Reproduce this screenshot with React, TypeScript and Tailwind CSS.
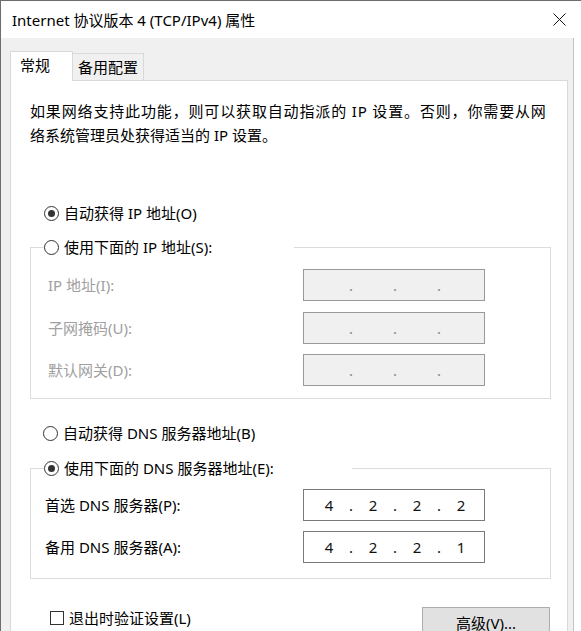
import React, { Fragment } from "react";

function Radio({ checked }: { checked?: boolean }) {
  return (
    <span className="w-[15px] h-[15px] rounded-full border border-[#333333] bg-white flex items-center justify-center shrink-0">
      {checked && <span className="w-[7px] h-[7px] rounded-full bg-[#333333]" />}
    </span>
  );
}

function IpBox({ values, disabled }: { values?: string[]; disabled?: boolean }) {
  const segs = values ?? ["", "", "", ""];
  return (
    <div
      className={`w-[182px] h-[32px] border flex items-center pl-[7px] ${
        disabled ? "border-[#999999] bg-[#f0f0f0] text-[#8a8a8a]" : "border-[#7a7a7a] bg-white text-[#111111]"
      }`}
    >
      {segs.map((s, i) => (
        <Fragment key={i}>
          <span className="w-[36px] text-center">{s}</span>
          {i < 3 && <span className="w-[8px] text-center">.</span>}
        </Fragment>
      ))}
    </div>
  );
}

function Row({ label, disabled, values, first, pad }: { label: string; disabled?: boolean; values?: string[]; first?: string; pad: string }) {
  return (
    <div className={`flex items-center h-[32px] ${first ?? ""}`}>
      <div className={`${pad} w-[272px] ${disabled ? "text-[#a0a0a0]" : "text-black"}`}>{label}</div>
      <IpBox values={values} disabled={disabled} />
    </div>
  );
}

export default function App() {
  return (
    <div className="w-[581px] h-[631px] overflow-hidden flex flex-col bg-white border-l border-t border-[#6d6d6d] font-['Noto_Sans','Noto_Sans_CJK_SC',sans-serif] text-[15px] text-black">
      {/* title bar */}
      <div className="h-[37px] shrink-0 bg-white flex items-center justify-between pl-[11px] pr-[15px]">
        <span className="leading-[20px]">Internet 协议版本 4 (TCP/IPv4) 属性</span>
        <svg width="13" height="13" viewBox="0 0 13 13">
          <path d="M0.5 0.5 L12.5 12.5 M12.5 0.5 L0.5 12.5" stroke="#111" strokeWidth="1" fill="none" />
        </svg>
      </div>

      {/* body */}
      <div className="flex-1 w-[573px] bg-[#f0f0f0] border-r border-[#c4c4c4] pl-[9px] pt-[13px] flex flex-col">
        <div className="flex items-end h-[29px]">
          <div className="relative z-10 w-[63px] h-[30px] -mb-px bg-white border border-b-0 border-[#d9d9d9] pl-[9px] pt-[3px] leading-[20px]">
            常规
          </div>
          <div className="w-[71px] h-[27px] bg-[#f0f0f0] border border-l-0 border-b-0 border-[#d9d9d9] flex items-center justify-center leading-[20px]">
            备用配置
          </div>
        </div>

        <div className="w-[558px] flex-1 bg-white border border-[#d9d9d9] pl-[19px] pt-[18px]">
          <div className="leading-[24px] whitespace-nowrap">
            <div className="tracking-[0.85px]">如果网络支持此功能，则可以获取自动指派的 IP 设置。否则，你需要从网</div>
            <div>络系统管理员处获得适当的 IP 设置。</div>
          </div>

          <div className="mt-[54px] h-[24px] flex items-center pl-[14px] gap-[5px]">
            <Radio checked />
            <span>自动获得 IP 地址(O)</span>
          </div>

          <fieldset className="mt-[10px] w-[521px] border border-[#dcdcdc] pb-[12px]">
            <legend className="ml-[13px] w-[250px] h-[24px] flex items-center gap-[5px]">
              <Radio />
              <span>使用下面的 IP 地址(S):</span>
            </legend>
            <Row label="IP 地址(I):" disabled first="mt-[10px]" pad="pl-[17px]" />
            <Row label="子网掩码(U):" disabled first="mt-[11px]" pad="pl-[17px]" />
            <Row label="默认网关(D):" disabled first="mt-[10px]" pad="pl-[17px]" />
          </fieldset>

          <div className="mt-[22px] h-[24px] flex items-center pl-[13px] gap-[5px]">
            <Radio />
            <span>自动获得 DNS 服务器地址(B)</span>
          </div>

          <fieldset className="mt-[11px] w-[521px] border border-[#dcdcdc] pb-[15px]">
            <legend className="ml-[13px] w-[308px] h-[24px] flex items-center gap-[5px]">
              <Radio checked />
              <span>使用下面的 DNS 服务器地址(E):</span>
            </legend>
            <Row label="首选 DNS 服务器(P):" values={["4", "2", "2", "2"]} first="mt-[9px]" pad="pl-[14px]" />
            <Row label="备用 DNS 服务器(A):" values={["4", "2", "2", "1"]} first="mt-[10px]" pad="pl-[14px]" />
          </fieldset>

          <div className="mt-[27px] w-[520px] flex items-start justify-between">
            <div className="ml-[20px] h-[24px] flex items-center gap-[5px]">
              <span className="w-[14px] h-[14px] border border-[#333333] bg-white shrink-0" />
              <span>退出时验证设置(L)</span>
            </div>
            <div className="mt-[1px] w-[128px] h-[32px] bg-[#e1e1e1] border border-[#adadad] flex items-center justify-center">
              高级(V)...
            </div>
          </div>
        </div>
      </div>
    </div>
  );
}
